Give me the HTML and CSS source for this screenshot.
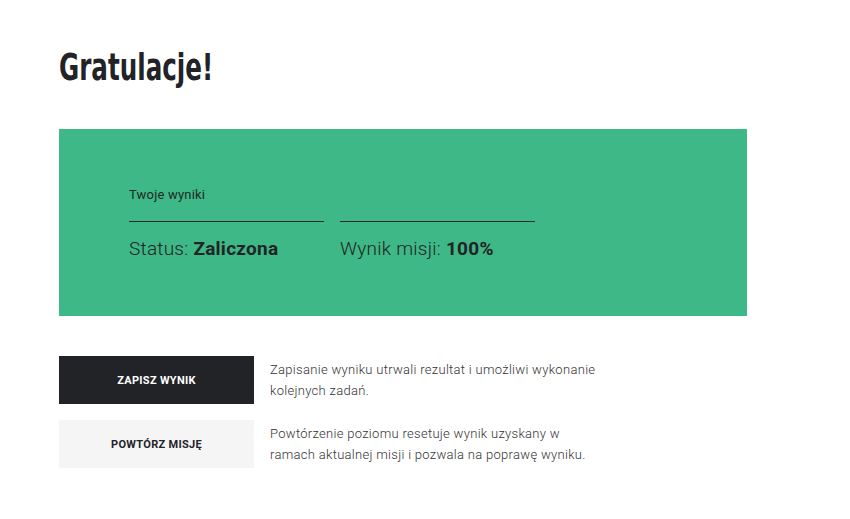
FILE: index.html
```html
<!DOCTYPE html>
<html lang="pl">
<head>
<meta charset="utf-8">
<link rel="stylesheet" href="styles.css">
</head>
<body>
<main class="page">
  <h1 class="title"><span class="title-text">Gratulacje!</span></h1>
  <section class="results">
    <p class="results-label">Twoje wyniki</p>
    <div class="results-row">
      <div class="result">Status: <strong>Zaliczona</strong></div>
      <div class="result">Wynik misji: <strong>100%</strong></div>
    </div>
  </section>
  <div class="actions">
    <div class="action">
      <button class="btn btn-dark">Zapisz wynik</button>
      <p class="action-text">Zapisanie wyniku utrwali rezultat i umożliwi wykonanie kolejnych zadań.</p>
    </div>
    <div class="action">
      <button class="btn btn-light">Powtórz misję</button>
      <p class="action-text">Powtórzenie poziomu resetuje wynik uzyskany w ramach aktualnej misji i pozwala na poprawę wyniku.</p>
    </div>
  </div>
</main>
</body>
</html>
```
FILE: styles.css
```css
* { box-sizing: border-box; }
body {
  margin: 0;
  background: #fff;
  font-family: Roboto, "Liberation Sans", sans-serif;
  color: #222327;
}
.page {
  padding: 40px 59px 0;
}
.title {
  margin: 0;
  height: 89px;
  padding-top: 4px;
  font-family: "DejaVu Sans Condensed", "DejaVu Sans", sans-serif;
  font-weight: 700;
  font-size: 38px;
  line-height: 46px;
  color: #222327;
}
.title-text {
  display: inline-block;
  transform: scaleX(0.72);
  transform-origin: left center;
}
.results {
  width: 688px;
  height: 187px;
  background: #3db886;
  padding: 57px 70px 0;
}
.results-label {
  margin: 0;
  font-size: 13px;
  font-weight: 400;
  letter-spacing: 0.2px;
  line-height: 17px;
  color: #1f2a24;
}
.results-row {
  display: flex;
  gap: 16px;
  margin-top: 18px;
}
.result {
  width: 195px;
  border-top: 1px solid #1f2a24;
  padding-top: 15px;
  font-size: 19px;
  font-weight: 300;
  letter-spacing: 0.25px;
  line-height: 24px;
  color: #222327;
}
.result strong { font-weight: 700; }
.actions {
  display: flex;
  flex-direction: column;
  gap: 16px;
  margin-top: 40px;
}
.action {
  display: flex;
  gap: 16px;
  align-items: flex-start;
}
.btn {
  flex: 0 0 195px;
  height: 48px;
  border: 0;
  font-family: Roboto, "Liberation Sans", sans-serif;
  font-size: 11px;
  font-weight: 700;
  letter-spacing: 0.3px;
  text-transform: uppercase;
  cursor: pointer;
}
.btn-dark { background: #222327; color: #fff; }
.btn-light { background: #f5f5f5; color: #222327; }
.action-text {
  margin: 3px 0 0;
  max-width: 330px;
  font-size: 13px;
  font-weight: 300;
  letter-spacing: 0.3px;
  line-height: 21px;
  color: #333;
}
```
